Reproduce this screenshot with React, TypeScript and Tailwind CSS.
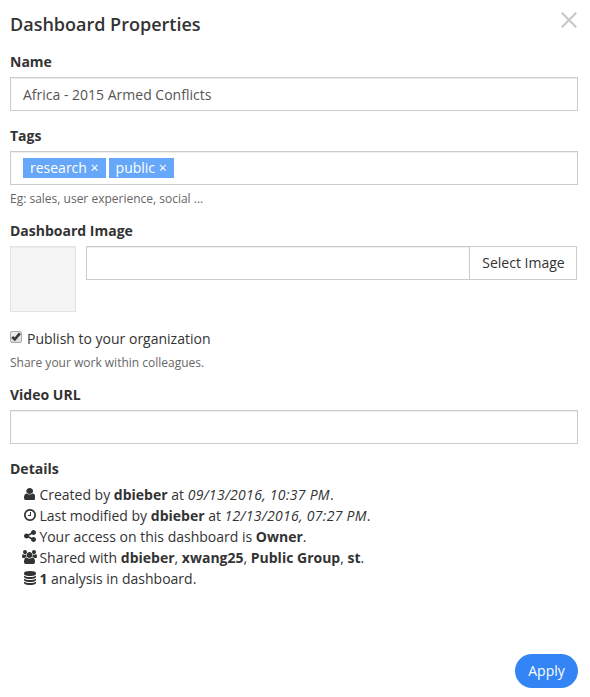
import { ReactNode } from "react";

const USER = "M1280 1399q0 109-62.5 187t-150.5 78h-854q-88 0-150.5-78t-62.5-187q0-85 8.5-160.5t31.5-152 58.5-131 94-89 134.5-34.5q131 128 313 128t313-128q76 0 134.5 34.5t94 89 58.5 131 31.5 152 8.5 160.5zm-256-887q0 159-112.5 271.5t-271.5 112.5-271.5-112.5-112.5-271.5 112.5-271.5 271.5-112.5 271.5 112.5 112.5 271.5z";
const CLOCK = "M1024 544v448q0 14-9 23t-23 9h-320q-14 0-23-9t-9-23v-64q0-14 9-23t23-9h224v-352q0-14 9-23t23-9h64q14 0 23 9t9 23zm416 352q0-148-73-273t-198-198-273-73-273 73-198 198-73 273 73 273 198 198 273 73 273-73 198-198 73-273zm224 0q0 209-103 385.5t-279.5 279.5-385.5 103-385.5-103-279.5-279.5-103-385.5 103-385.5 279.5-279.5 385.5-103 385.5 103 279.5 279.5 103 385.5z";
const SHARE = "M1344 1024q133 0 226.5 93.5t93.5 226.5-93.5 226.5-226.5 93.5-226.5-93.5-93.5-226.5q0-12 2-34l-360-180q-92 86-218 86-133 0-226.5-93.5t-93.5-226.5 93.5-226.5 226.5-93.5q126 0 218 86l360-180q-2-22-2-34 0-133 93.5-226.5t226.5-93.5 226.5 93.5 93.5 226.5-93.5 226.5-226.5 93.5q-126 0-218-86l-360 180q2 22 2 34t-2 34l360 180q92-86 218-86z";
const USERS = "M593 896q-162 5-265 128h-134q-82 0-138-40.5t-56-118.5q0-353 124-353 6 0 43.5 21t97.5 42.5 119 21.5q67 0 133-23-5 37-5 66 0 139 81 256zm1071 637q0 120-73 189.5t-194 69.5h-874q-121 0-194-69.5t-73-189.5q0-53 3.5-103.5t14-109 26.5-108.5 43-97.5 62-81 85.5-53.5 111.5-20q10 0 43 21.5t73 48 107 48 135 21.5 135-21.5 107-48 73-48 43-21.5q61 0 111.5 20t85.5 53.5 62 81 43 97.5 26.5 108.5 14 109 3.5 103.5zm-1024-1277q0 106-75 181t-181 75-181-75-75-181 75-181 181-75 181 75 75 181zm704 384q0 159-112.5 271.5t-271.5 112.5-271.5-112.5-112.5-271.5 112.5-271.5 271.5-112.5 271.5 112.5 112.5 271.5zm576 225q0 78-56 118.5t-138 40.5h-134q-103-123-265-128 81-117 81-256 0-29-5-66 66 23 133 23 59 0 119-21.5t97.5-42.5 43.5-21q124 0 124 353zm-128-609q0 106-75 181t-181 75-181-75-75-181 75-181 181-75 181 75 75 181z";
const DATABASE = "M768 768q237 0 443-43t325-127v170q0 69-103 128t-280 93.5-385 34.5-385-34.5-280-93.5-103-128v-170q119 84 325 127t443 43zm0 768q237 0 443-43t325-127v170q0 69-103 128t-280 93.5-385 34.5-385-34.5-280-93.5-103-128v-170q119 84 325 127t443 43zm0-384q237 0 443-43t325-127v170q0 69-103 128t-280 93.5-385 34.5-385-34.5-280-93.5-103-128v-170q119 84 325 127t443 43zm0-1152q208 0 385 34.5t280 93.5 103 128v128q0 69-103 128t-280 93.5-385 34.5-385-34.5-280-93.5-103-128v-128q0-69 103-128t280-93.5 385-34.5z";

function Icon({ d, w, width = w / 128 }: { d: string; w: number; width?: number }) {
  return (
    <svg viewBox={`0 0 ${w} 1792`} width={width} height="14" preserveAspectRatio="none" fill="currentColor" className="shrink-0">
      <path d={d} />
    </svg>
  );
}

function Heading({ children }: { children: ReactNode }) {
  return <h2 className="h-5 text-sm leading-5 font-bold text-[#333]">{children}</h2>;
}

function Tag({ children }: { children: ReactNode }) {
  return <span className="h-5 bg-[#66a7f9] px-[7px] text-sm leading-5 text-white">{children} ×</span>;
}

function When({ children }: { children: ReactNode }) {
  return <i className="tracking-[0.3px]">{children}</i>;
}

function Detail({ icon, children }: { icon: ReactNode; children: ReactNode }) {
  return (
    <li className="flex h-[21px] items-center">
      <span className="mr-[0.7px] flex w-[18px] justify-center pb-px">{icon}</span>
      <span className="whitespace-pre">{children}</span>
    </li>
  );
}

export default function App() {
  return (
    <main className="flex h-[697px] w-[590px] flex-col bg-white pr-3 pl-[10px] font-['Open_Sans',sans-serif] text-sm text-[#333]">
      <header className="flex h-[52px] items-start justify-between">
        <h1 className="mt-[12px] text-[18px] leading-6 font-semibold">Dashboard Properties</h1>
        <svg className="mt-[12px] mr-px" width="16" height="16" viewBox="0 0 16 16" stroke="#c8c8c8" strokeWidth="2.2">
          <path d="M.7.7 15.3 15.3M15.3.7.7 15.3" />
        </svg>
      </header>
      <Heading>Name</Heading>
      <div className="mt-[5px] h-[34px] border border-[#ccc] px-3 pt-px leading-8 text-[#555] shadow-[inset_0_1px_1px_rgba(0,0,0,0.075)]">Africa - 2015 Armed Conflicts</div>
      <div className="mt-[15px]"><Heading>Tags</Heading></div>
      <div className="mt-[5px] flex h-[34px] items-center gap-[3px] border border-[#ccc] px-3 shadow-[inset_0_1px_1px_rgba(0,0,0,0.075)]">
        <Tag>research</Tag>
        <Tag>public</Tag>
      </div>
      <p className="mt-[5px] h-[17px] text-xs leading-[17px] text-[#666]">Eg: sales, user experience, social ...</p>
      <div className="mt-[14px]"><Heading>Dashboard Image</Heading></div>
      <div className="mt-[5px] flex h-[66px]">
        <div className="w-[66px] border border-[#e3e3e3] bg-[#f5f5f5] shadow-[inset_0_1px_1px_rgba(0,0,0,0.05)]" />
        <div className="ml-[10px] h-[34px] w-[384px] border border-[#ccc] shadow-[inset_0_1px_1px_rgba(0,0,0,0.075)]" />
        <button className="-ml-px h-[34px] w-[108px] border border-[#ccc] pl-px">Select Image</button>
      </div>
      <div className="mt-[17px] flex h-5 items-center gap-[5px]">
        <label className="relative -top-[2px] size-3 rounded-[2px] border border-[#a9a9a9] bg-linear-to-b from-[#eee] to-[#ddd]">
          <input type="checkbox" defaultChecked className="sr-only" />
          <svg className="absolute -top-px left-0" width="10" height="11" viewBox="0 0 10 11" fill="none" stroke="#3c3c3c" strokeWidth="2.7">
            <path d="M1.2 5.9 3.8 8.3 8.9 2.4" />
          </svg>
        </label>
        <span>Publish to your organization</span>
      </div>
      <p className="mt-[5px] h-[17px] text-xs leading-[17px] text-[#666]">Share your work within colleagues.</p>
      <div className="mt-[14px]"><Heading>Video URL</Heading></div>
      <div className="mt-[5px] h-[34px] border border-[#ccc] shadow-[inset_0_1px_1px_rgba(0,0,0,0.075)]" />
      <div className="mt-[15px]"><Heading>Details</Heading></div>
      <ul className="mt-[5px] pl-[10.7px]">
        <Detail icon={<Icon d={USER} w={1280} width={11.4} />}>Created by <b>dbieber</b> at <When>09/13/2016, 10:37 PM</When>.</Detail>
        <Detail icon={<Icon d={CLOCK} w={1792} />}>Last modified by <b>dbieber</b> at <When>12/13/2016, 07:27 PM</When>.</Detail>
        <Detail icon={<Icon d={SHARE} w={1792} />}>Your access on this dashboard is <b>Owner</b>.</Detail>
        <Detail icon={<Icon d={USERS} w={1920} />}>Shared with <b>dbieber</b>, <b>xwang25</b>, <b>Public Group</b>, <b>st</b>.</Detail>
        <Detail icon={<Icon d={DATABASE} w={1536} />}><b>1</b> analysis in dashboard.</Detail>
      </ul>
      <button className="mt-[65px] h-[34px] w-[63px] self-end rounded-full bg-[#3385f5] text-white">Apply</button>
    </main>
  );
}
